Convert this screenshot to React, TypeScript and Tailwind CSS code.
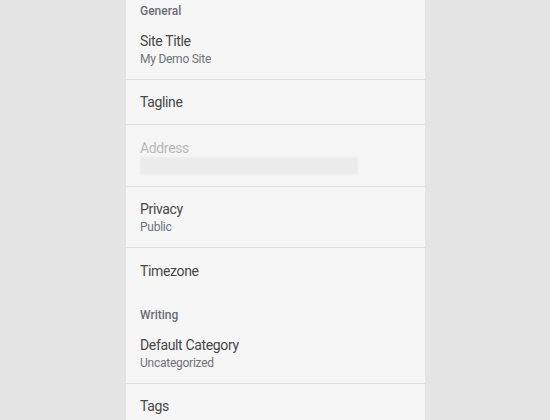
import React from "react";

function Header({ label }: { label: string }) {
  return (
    <div className="h-[30px] pt-[14px] px-[14px]">
      <div className="text-[12px] leading-[16px] font-medium text-[#6a6e73]">{label}</div>
    </div>
  );
}

function Row({ title, sub, border = true }: { title: string; sub?: string; border?: boolean }) {
  return (
    <div
      className={`px-[14px] flex flex-col justify-center ${sub ? "h-[61px]" : "h-[45px]"} ${
        border ? "border-b border-[#e0e0e0]" : ""
      }`}
    >
      <div className="text-[14px] leading-[18px] tracking-[-0.35px] text-[#474747]">{title}</div>
      {sub && (
        <div className="text-[12px] leading-[16px] tracking-[-0.25px] text-[#6e7378] mt-[1px]">{sub}</div>
      )}
    </div>
  );
}

export default function App() {
  return (
    <div
      className="w-[550px] h-[420px] bg-[#e5e5e5] overflow-hidden flex justify-center"
      style={{ fontFamily: "Roboto, 'Noto Sans', sans-serif" }}
    >
      <div className="w-[299px] ml-[1px] bg-[#f6f6f6] h-full">
        <div className="-mt-[11px]">
          <Header label="General" />
          <Row title="Site Title" sub="My Demo Site" />
          <Row title="Tagline" />
          <div className="h-[62px] px-[14px] border-b border-[#e0e0e0] pt-[14px]">
            <div className="text-[14px] leading-[18px] tracking-[-0.35px] text-[#b8b8b8]">Address</div>
            <div className="h-[18px] w-[218px] bg-[#ebebeb] rounded-[2px] blur-[1px]" />
          </div>
          <Row title="Privacy" sub="Public" />
          <Row title="Timezone" border={false} />
          <Header label="Writing" />
          <Row title="Default Category" sub="Uncategorized" />
          <Row title="Tags" />
        </div>
      </div>
    </div>
  );
}
